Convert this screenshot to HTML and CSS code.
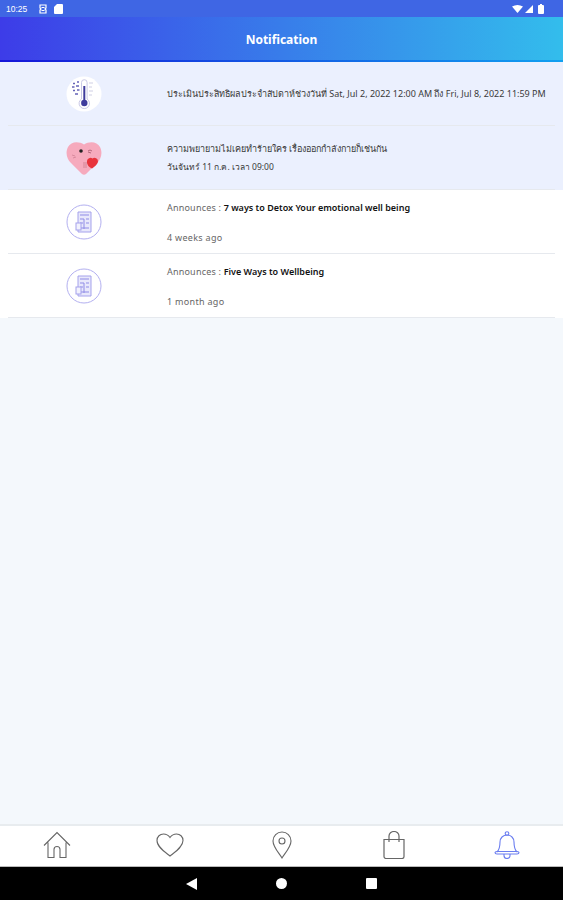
FILE: index.html
```html
<!DOCTYPE html>
<html>
	<head>
		<title>Notification</title>
		<meta name="viewport" content="width=device-width, initial-scale=1.0">
		<link rel="stylesheet" href="styles.css">
	</head>
	<body>
		<div class="statusbar">
			<div class="status-left">
				<span class="clock">10:25</span>
				<svg class="status-icon" width="8" height="10" viewBox="0 0 8 10"><path d="M1 1h6v3L6 5l1 1v3H1V6l1-1-1-1z" fill="none" stroke="#fff" stroke-width="1.2"/><path d="M2.500 3.500h3M2.500 6.500h3" stroke="#fff"/></svg>
				<svg class="status-icon" width="9" height="10" viewBox="0 0 9 10"><path d="M3 0h5a1 1 0 0 1 1 1v8a1 1 0 0 1-1 1H1a1 1 0 0 1-1-1V3z" fill="#fff"/></svg>
			</div>
			<div class="status-right">
				<svg width="11" height="8" viewBox="0 0 11 8"><path d="M0 1.500Q5.500-1.500 11 1.500L5.500 8z" fill="#fff"/></svg>
				<svg width="8" height="8" viewBox="0 0 8 8"><path d="M8 0v8H0z" fill="#fff"/></svg>
				<svg class="battery" width="6" height="10" viewBox="0 0 6 10"><path d="M2 0h2v1h1a1 1 0 0 1 1 1v7a1 1 0 0 1-1 1H1a1 1 0 0 1-1-1V2a1 1 0 0 1 1-1h1z" fill="#fff"/></svg>
			</div>
		</div>
		<div class="header">Notification</div>

		<div class="list">
			<div class="row unread">
				<div class="row-inner">
					<div class="thumb">
						<svg width="36" height="36" viewBox="0 0 36 36">
							<circle cx="18" cy="18" r="17.500" fill="#fff"/>
							<path d="M15.500 6.500a2.800 2.800 0 0 1 5.600 0V23a5.200 5.200 0 1 1-5.600 0z" fill="#fff" stroke="#c9c8e6"/>
							<path d="M18.300 10v16" stroke="#3f3c9c" stroke-width="2"/>
							<circle cx="18.300" cy="27" r="3.200" fill="#3f3c9c"/>
							<path d="M23 7h4M23 11h3M23 15h4M23 19h3" stroke="#cfcfe4"/>
							<path d="M7 7.500h2M11 6h2M6 11h2.500M10 10h3M7 14.500h2M11 14h2.500M9 18h3" stroke="#6664b8" stroke-width="1.600"/>
						</svg>
					</div>
					<div class="body single">
						<p class="line">ประเมินประสิทธิผลประจำสัปดาห์ช่วงวันที่ Sat, Jul 2, 2022 12:00 AM ถึง Fri, Jul 8, 2022 11:59 PM</p>
					</div>
				</div>
			</div>
			<div class="row unread">
				<div class="row-inner">
					<div class="thumb">
						<svg width="36" height="34" viewBox="0 0 36 34">
							<path d="M18 3.500C13 0 5 0 2 6c-3 6-1 12 3 16l11 11c1 1 3 1 4 0l11-11c4-4 6-10 3-16-3-6-11-6-16-2.500z" fill="#f6aabd"/>
							<circle cx="15" cy="10" r="1.800" fill="#222"/>
							<path d="M22 10q2-2 4 0M22 11l3 1" fill="none" stroke="#b4677c" stroke-width="1"/>
							<path d="M6 14l3 1M7 17l3-1" stroke="#d98a9e" stroke-width="1"/>
							<path d="M21 20a3.500 3.500 0 0 1 5.500-2.500 3.500 3.500 0 0 1 5.500 3c-.5 3.500-4 5.500-6 7-2.500-1-5.500-3.500-5-7.500z" fill="#e8333c"/>
							<path d="M17 21h4v6h-4z" fill="#e597a9"/>
						</svg>
					</div>
					<div class="body single">
						<p class="line">ความพยายามไม่เคยทำร้ายใคร เรื่องออกกำลังกายก็เช่นกัน</p>
						<p class="line small">วันจันทร์ 11 ก.ค. เวลา 09:00</p>
					</div>
				</div>
			</div>
			<div class="row">
				<div class="row-inner">
					<div class="thumb">
						<svg width="36" height="36" viewBox="0 0 36 36">
							<circle cx="18" cy="18" r="17" fill="#fff" stroke="#b3b0f0"/>
							<path d="M12 8h13v20H12z" fill="#e8e8fb" stroke="#a5a2ec"/>
							<path d="M14 11h9M14 15h4M20 15h3M14 19h3M20 19h3M14 24h9M18 15v10" stroke="#8f8be6"/>
							<rect x="10" y="19" width="5" height="7" fill="#f2f2fd" stroke="#a5a2ec"/>
						</svg>
					</div>
					<div class="body">
						<p class="title"><span class="kind">Announces : </span><b>7 ways to Detox Your emotional well being</b></p>
						<p class="when">4 weeks ago</p>
					</div>
				</div>
			</div>
			<div class="row">
				<div class="row-inner">
					<div class="thumb">
						<svg width="36" height="36" viewBox="0 0 36 36">
							<circle cx="18" cy="18" r="17" fill="#fff" stroke="#b3b0f0"/>
							<path d="M12 8h13v20H12z" fill="#e8e8fb" stroke="#a5a2ec"/>
							<path d="M14 11h9M14 15h4M20 15h3M14 19h3M20 19h3M14 24h9M18 15v10" stroke="#8f8be6"/>
							<rect x="10" y="19" width="5" height="7" fill="#f2f2fd" stroke="#a5a2ec"/>
						</svg>
					</div>
					<div class="body">
						<p class="title"><span class="kind">Announces : </span><b>Five Ways to Wellbeing</b></p>
						<p class="when">1 month ago</p>
					</div>
				</div>
			</div>
		</div>

		<div class="tabbar">
			<div class="tab">
				<svg width="28" height="28" viewBox="0 0 28 28" fill="none" stroke="#666" stroke-width="1.100"><path d="M1 14.500L14 1.500l13 13M5 11.500V26.500h6v-8a3 3 0 0 1 6 0v8h6V11.500"/></svg>
			</div>
			<div class="tab">
				<svg width="28" height="24" viewBox="0 0 28 24" fill="none" stroke="#666" stroke-width="1.100"><path d="M14 23C9 19 1 14 1 7.500 1 3.500 4 1 7.500 1c3 0 5 1.500 6.500 3.500C15.500 2.500 17.500 1 20.500 1 24 1 27 3.500 27 7.500 27 14 19 19 14 23z"/></svg>
			</div>
			<div class="tab">
				<svg width="20" height="28" viewBox="0 0 20 28" fill="none" stroke="#666" stroke-width="1.100"><path d="M10 27C7 22 1 16 1 10a9 9 0 0 1 18 0c0 6-6 12-9 17z"/><circle cx="10" cy="10" r="3"/></svg>
			</div>
			<div class="tab">
				<svg width="22" height="28" viewBox="0 0 22 28" fill="none" stroke="#666" stroke-width="1.200"><path d="M1 8.500h20v17a2 2 0 0 1-2 2H3a2 2 0 0 1-2-2z"/><path d="M6 11V5a5 4.500 0 0 1 10 0v6"/></svg>
			</div>
			<div class="tab">
				<svg width="26" height="28" viewBox="0 0 26 28" fill="none" stroke="#6a7df0" stroke-width="1.100"><path d="M3 21c3-3 3-6 3-10 0-4 3-7 7-7s7 3 7 7c0 4 0 7 3 10"/><path d="M1 21.500c0 1 1 1.500 2 1.500h20c1 0 2-.5 2-1.500s-1-1-2-1H3c-1 0-2 0-2 1z"/><path d="M10 23v1.500a3 3 0 0 0 6 0V23"/><circle cx="13" cy="2.500" r="1.800"/></svg>
			</div>
		</div>

		<div class="navbar">
			<svg width="11" height="12" viewBox="0 0 11 12"><path d="M11 0v12L0 6z" fill="#fff"/></svg>
			<span class="nav-circle"></span>
			<span class="nav-square"></span>
		</div>
	</body>
</html>
```

FILE: styles.css
```css
* {
	box-sizing: border-box;
}
html, body {
	height: 100%;
}
body {
	margin: 0;
	height: 900px;
	display: flex;
	flex-direction: column;
	overflow: hidden;
	background-color: #f4f8fc;
	font-family: "Liberation Sans", "Noto Sans", sans-serif;
}
p {
	margin: 0;
}
.statusbar {
	height: 17px;
	padding: 0 19px 0 6px;
	display: flex;
	justify-content: space-between;
	align-items: center;
	background-color: #3f66e4;
	color: white;
}
.status-left, .status-right {
	display: flex;
	align-items: center;
}
.status-right {
	gap: 2px;
}
.battery {
	margin-left: 3px;
}
.clock {
	font-size: 8.500px;
	width: 33px;
}
.status-icon {
	margin-right: 7px;
}
.header {
	height: 45px;
	padding-top: 2px;
	display: flex;
	justify-content: center;
	align-items: center;
	background: linear-gradient(90deg, #3d3ce8, #33bdec);
	border-bottom: 2px solid;
	border-image: linear-gradient(90deg, #1515d8, #10a0f0) 1;
	color: white;
	font-family: "Noto Sans", sans-serif;
	font-weight: 700;
	font-size: 12px;
}
.list {
	flex: 1;
}
.row {
	height: 64px;
	padding: 0 8px;
	background-color: white;
}
.row.unread {
	background-color: #ebf0fe;
}
.row-inner {
	height: 100%;
	display: flex;
	align-items: center;
	border-bottom: 1px solid #e6e9ee;
}
.thumb {
	width: 159px;
	padding-right: 7px;
	display: flex;
	justify-content: center;
}
.thumb svg {
	display: block;
}
.body {
	flex: 1;
	height: 100%;
	padding-top: 11px;
	font-family: "Noto Sans", sans-serif;
	font-size: 9px;
	color: #3a3a3a;
}
.body.single {
	padding-top: 0;
	display: flex;
	flex-direction: column;
	justify-content: center;
}
.line {
	line-height: 18px;
}
.line.small {
	font-size: 8.500px;
}
.title {
	line-height: 14px;
	color: #111;
}
.kind {
	color: #666;
	letter-spacing: .2px;
}
.title b {
	font-weight: 600;
}
.when {
	margin-top: 16px;
	line-height: 14px;
	letter-spacing: .3px;
	color: #666;
}
.tabbar {
	height: 43px;
	padding: 0 0 3px 1px;
	display: grid;
	grid-template-columns: repeat(5, 1fr);
	background-color: white;
	border-top: 2px solid #e8ecef;
	border-bottom: 1px solid #bbb;
}
.tab {
	display: flex;
	justify-content: center;
	align-items: center;
}
.navbar {
	height: 33px;
	padding-left: 186px;
	display: flex;
	align-items: center;
	gap: 79px;
	background-color: black;
}
.nav-circle {
	width: 11px;
	height: 11px;
	border-radius: 50%;
	background-color: white;
}
.nav-square {
	width: 11px;
	height: 11px;
	border-radius: 1px;
	background-color: white;
}
```
